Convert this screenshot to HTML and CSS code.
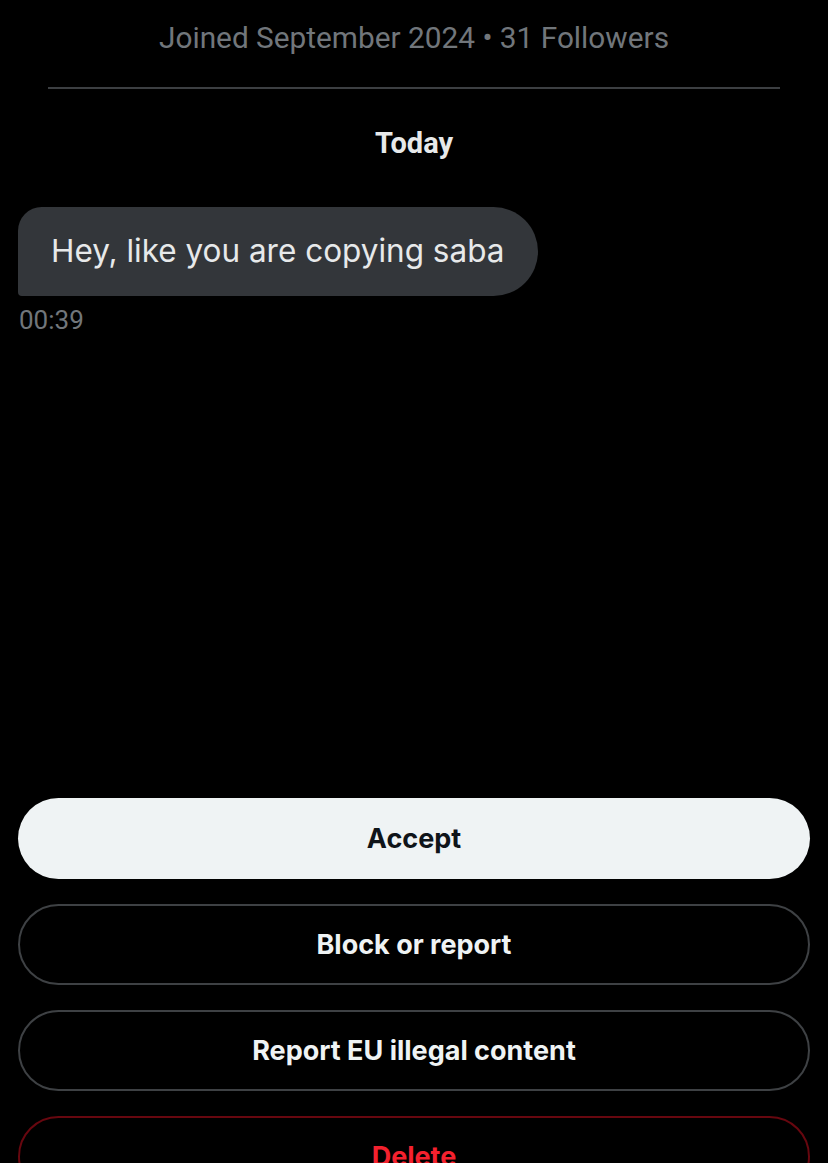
FILE: index.html
```html
<!DOCTYPE html>
<html lang="en">
<head>
<meta charset="utf-8">
<title>Message request</title>
<link rel="stylesheet" href="styles.css">
</head>
<body>
<div class="screen">
  <header class="profile-meta">
    <p class="joined">Joined September 2024 • 31 Followers</p>
    <hr class="divider">
  </header>
  <section class="conversation">
    <div class="day">Today</div>
    <div class="message">
      <div class="bubble">Hey, like you are copying saba</div>
      <div class="time">00:39</div>
    </div>
  </section>
  <footer class="actions">
    <button class="btn btn-primary">Accept</button>
    <button class="btn btn-outline">Block or report</button>
    <button class="btn btn-outline">Report EU illegal content</button>
    <button class="btn btn-danger">Delete</button>
  </footer>
</div>
</body>
</html>
```
FILE: styles.css
```css
html, body {
  margin: 0;
  padding: 0;
  background: #000;
}
body {
  font-family: Roboto, "Liberation Sans", Arial, sans-serif;
  color: #e7e9ea;
  width: 828px;
  height: 1163px;
  overflow: hidden;
}
.screen {
  display: flex;
  flex-direction: column;
  height: 1163px;
}
.profile-meta {
  display: flex;
  flex-direction: column;
  align-items: center;
  padding-top: 18px;
}
.joined {
  margin: 0;
  font-size: 29.8px;
  line-height: 40px;
  color: #71767b;
}
.divider {
  width: 732px;
  margin: 29px 0 0;
  border: none;
  border-top: 2px solid #3c3f42;
}
.conversation {
  display: flex;
  flex-direction: column;
  flex: 1;
}
.day {
  text-align: center;
  font-size: 29px;
  font-weight: 700;
  line-height: 36px;
  margin-top: 36px;
  color: #e7e9ea;
}
.message {
  display: flex;
  flex-direction: column;
  align-items: flex-start;
  padding: 0 18px;
  margin-top: 46px;
}
.bubble {
  font-family: Inter, Roboto, sans-serif;
  background: #33363a;
  color: #e7e9ea;
  font-size: 31.5px;
  line-height: 40px;
  padding: 24px 34px 25px 33px;
  border-radius: 24px 45px 45px 4px;
}
.time {
  margin-top: 9px;
  font-size: 26px;
  line-height: 30px;
  color: #71767b;
  padding-left: 1px;
}
.actions {
  display: flex;
  flex-direction: column;
  gap: 25px;
  padding: 0 18px;
  margin-bottom: -34px;
}
.btn {
  height: 81px;
  border-radius: 41px;
  font-family: Inter, Roboto, sans-serif;
  font-size: 27px;
  font-weight: 700;
  cursor: pointer;
  width: 100%;
}
.btn-primary {
  background: #eff3f4;
  color: #0f1419;
  border: none;
}
.btn-outline {
  background: #000;
  color: #eff3f4;
  border: 2px solid #3e4144;
}
.btn-danger {
  background: #000;
  color: #f4212e;
  border: 2px solid #67070f;
}
```
